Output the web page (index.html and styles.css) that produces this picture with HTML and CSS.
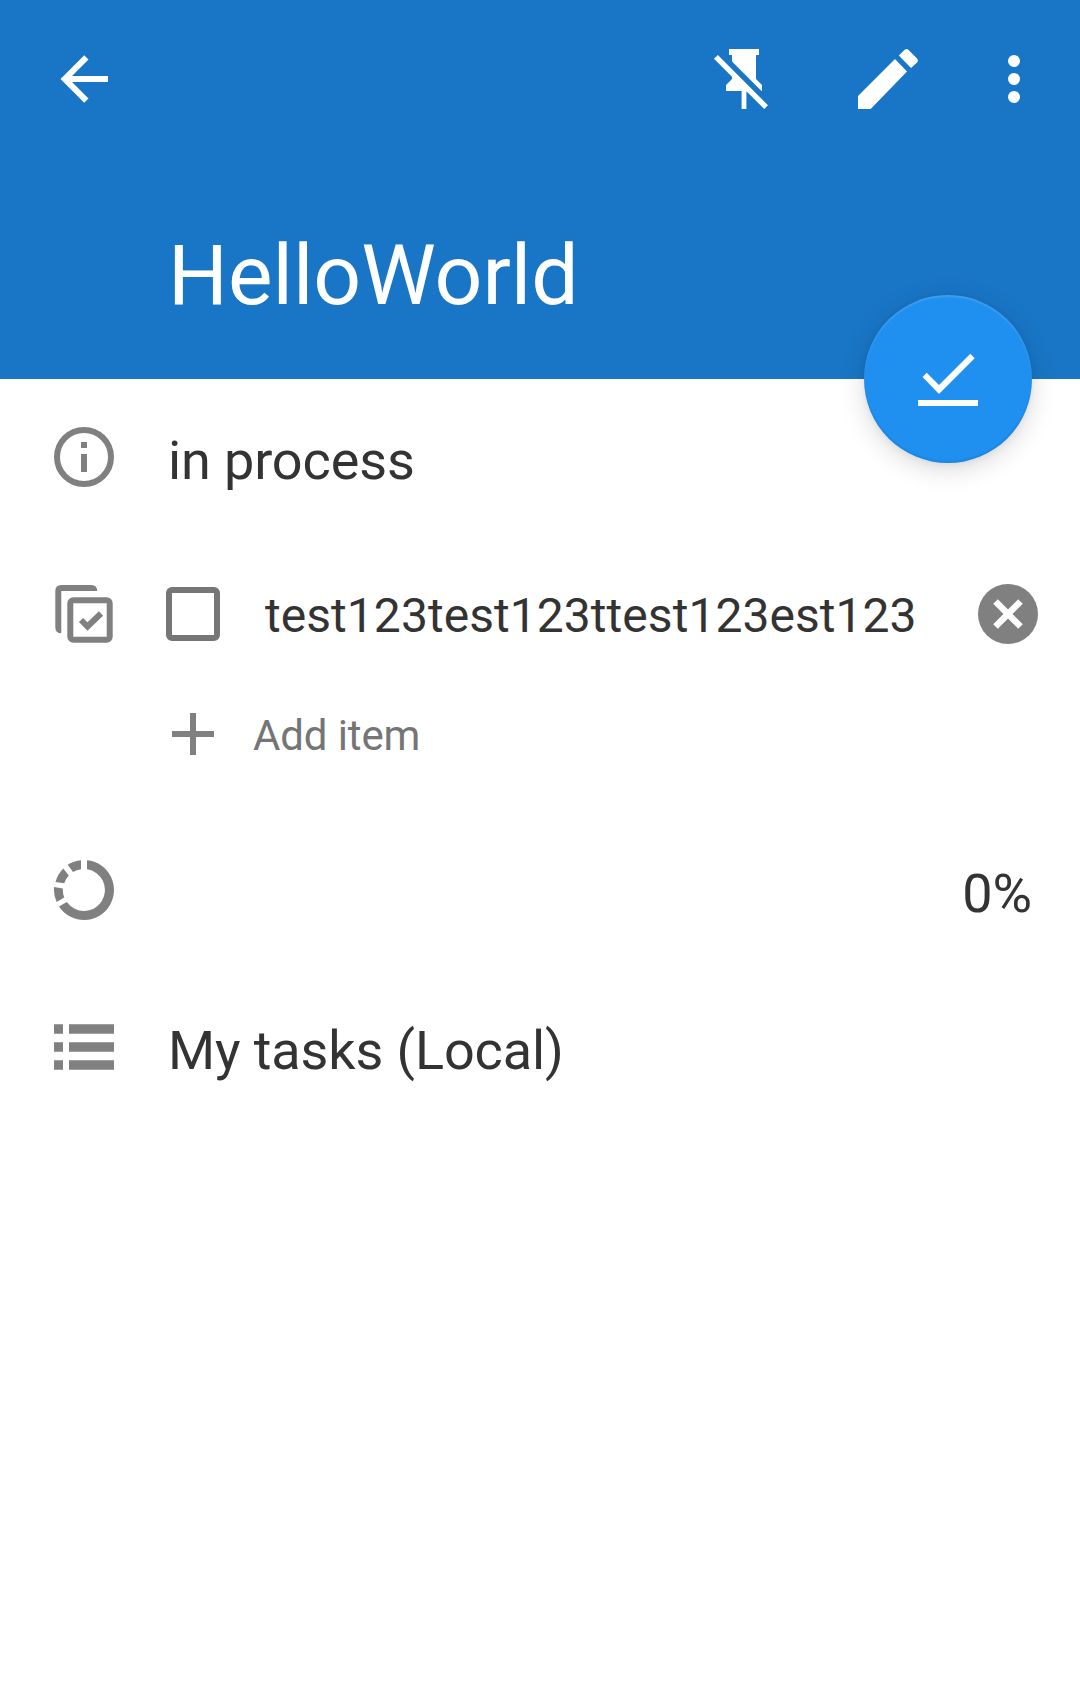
FILE: index.html
```html
<!DOCTYPE html>
<html lang="en">
<head>
<meta charset="utf-8">
<title>HelloWorld</title>
<link rel="stylesheet" href="styles.css">
</head>
<body>
<header class="header">
  <nav class="toolbar">
    <svg class="icon" viewBox="0 0 24 24"><path d="M20 11v2H8l5.500 5.500-1.420 1.420L4.160 12l7.920-7.920L13.500 5.500 8 11z"/></svg>
    <div class="actions">
      <svg class="icon" viewBox="0 0 24 24"><path d="M2 5.270 3.280 4 20 20.720 18.730 22l-5.930-5.930V22h-1.600v-6H6v-2l2-2v-.730zM16 12l2 2v2h-.180L8 6.180V4H7V2h10v2h-1z"/></svg>
      <svg class="icon" viewBox="0 0 72 72"><path d="M6 66V53L43 16 55 28.500 18.700 66zM46.800 12.500 52.200 7.200Q54.500 5 56.800 7.200L64.800 15.200Q67 17.500 64.800 19.800L59 25z"/></svg>
      <svg class="icon" viewBox="0 0 24 24"><circle cx="12" cy="6" r="2"/><circle cx="12" cy="12" r="2"/><circle cx="12" cy="18" r="2"/></svg>
    </div>
  </nav>
  <h1 class="title">HelloWorld</h1>
  <button class="fab" aria-label="Complete">
    <svg class="icon" viewBox="0 0 72 72"><path d="M10.500 34 14.700 29.800 27 42.100 58.300 10.800 62.700 15.200 27 50.900zM6 57h60v6H6z"/></svg>
  </button>
</header>
<main class="details">
  <section class="row">
    <svg class="icon" viewBox="0 0 72 72"><circle class="line" cx="36" cy="36" r="27"/><path d="M33 21h6v6h-6zM33 33h6v18h-6z"/></svg>
    <p class="text">in process</p>
  </section>
  <section class="row checklist">
    <svg class="icon" viewBox="0 0 72 72"><path d="M7.300 13q0-6 6-6H43.500q5.500 0 5.800 6H13.300V55.300q-6 0-6-6z"/><rect class="line" x="22.300" y="22.300" width="39.400" height="39.400" rx="3"/><path class="line" d="m33 42 6.500 6.500L53 35.500"/></svg>
    <span class="checkbox"></span>
    <p class="text item">test123test123ttest123est123</p>
    <svg class="icon" viewBox="0 0 72 72"><circle cx="36" cy="36" r="30"/><path class="cross" d="m23.500 23.500 25 25m0-25-25 25"/></svg>
  </section>
  <section class="row add">
    <svg class="icon" viewBox="0 0 72 72"><path d="M33 15h6v18h18v6H39v18h-6V39H15v-6h18z"/></svg>
    <p class="text hint">Add item</p>
  </section>
  <section class="row">
    <svg class="icon" viewBox="0 0 72 72"><path d="M39 6.150A30 30 0 1 1 11 52.600L18.800 48.100A21 21 0 1 0 39 15.200zM33 6.150V15.200A21 21 0 0 0 25 18L19.700 10.700A30 30 0 0 1 33 6.150zM15.300 14.500 20.800 21.500A21 21 0 0 0 16.200 29.300L7.500 28A30 30 0 0 1 15.300 14.500zM6 33 14.900 34.500A21 21 0 0 0 16.200 43.500L8.700 48A30 30 0 0 1 6 33z"/></svg>
    <p class="text percent">0%</p>
  </section>
  <section class="row list">
    <svg class="icon" viewBox="0 0 72 72"><path d="M6 13.300h9v9.400H6zM21 13.300h45v9.400H21zM6 31.300h9v9.400H6zM21 31.300h45v9.400H21zM6 49.300h9v9.400H6zM21 49.300h45v9.400H21z"/></svg>
    <p class="text">My tasks (Local)</p>
  </section>
</main>
</body>
</html>
```
FILE: styles.css
```css
* { box-sizing: border-box; }
body {
  margin: 0;
  min-height: 1699px;
  background: #fff;
  color: #333;
  font-family: Roboto, sans-serif;
}
.icon {
  display: block;
  flex: none;
  width: 72px;
  height: 72px;
  fill: currentColor;
}
.header {
  position: relative;
  height: 379px;
  background: #1976c6;
  color: #fff;
}
.toolbar {
  display: flex;
  justify-content: space-between;
  padding: 43px 30px 0 48px;
}
.actions {
  display: flex;
  gap: 72px;
}
.actions .icon:last-child { margin-left: -18px; }
.title {
  margin: 111px 0 0 168px;
  font-size: 84px;
  font-weight: 400;
  line-height: 100px;
}
/* The action button straddles the lower edge of the header. */
.fab {
  position: absolute;
  right: 48px;
  bottom: -84px;
  display: grid;
  place-items: center;
  width: 168px;
  height: 168px;
  padding: 0;
  border: 0;
  border-radius: 50%;
  background: #1f8ff0;
  color: #fff;
  box-shadow: 0 6px 26px rgba(0, 0, 0, .15), 0 2px 6px rgba(0, 0, 0, .05), inset 0 2px 2px rgba(255, 255, 255, .14), inset 0 -2px 2px rgba(0, 0, 0, .08);
}
.row {
  display: flex;
  align-items: center;
  height: 156px;
  padding: 0 48px;
}
.row .icon { color: #808080; }
.line {
  fill: none;
  stroke: currentColor;
  stroke-width: 6;
}
.cross {
  fill: none;
  stroke: #fff;
  stroke-width: 6.500;
}
.text {
  margin: 0;
  padding: 7px 0 0 48px;
  font-size: 54px;
  line-height: 64px;
  letter-spacing: -.12px;
  white-space: nowrap;
}
.checklist {
  height: 158px;
  padding-right: 36px;
}
.checkbox {
  width: 54px;
  height: 54px;
  margin-left: 46px;
  border: 6px solid #767676;
  border-radius: 6px;
}
.item {
  flex: 1;
  padding: 4px 0 0 45px;
  font-size: 48px;
  letter-spacing: .05px;
}
.add {
  height: 82px;
  margin-bottom: 37px;
  padding-left: 157px;
}
.hint {
  padding: 3px 0 0 24px;
  color: #757575;
  font-size: 42px;
}
.percent { margin-left: auto; }
.list { height: 158px; }
```
